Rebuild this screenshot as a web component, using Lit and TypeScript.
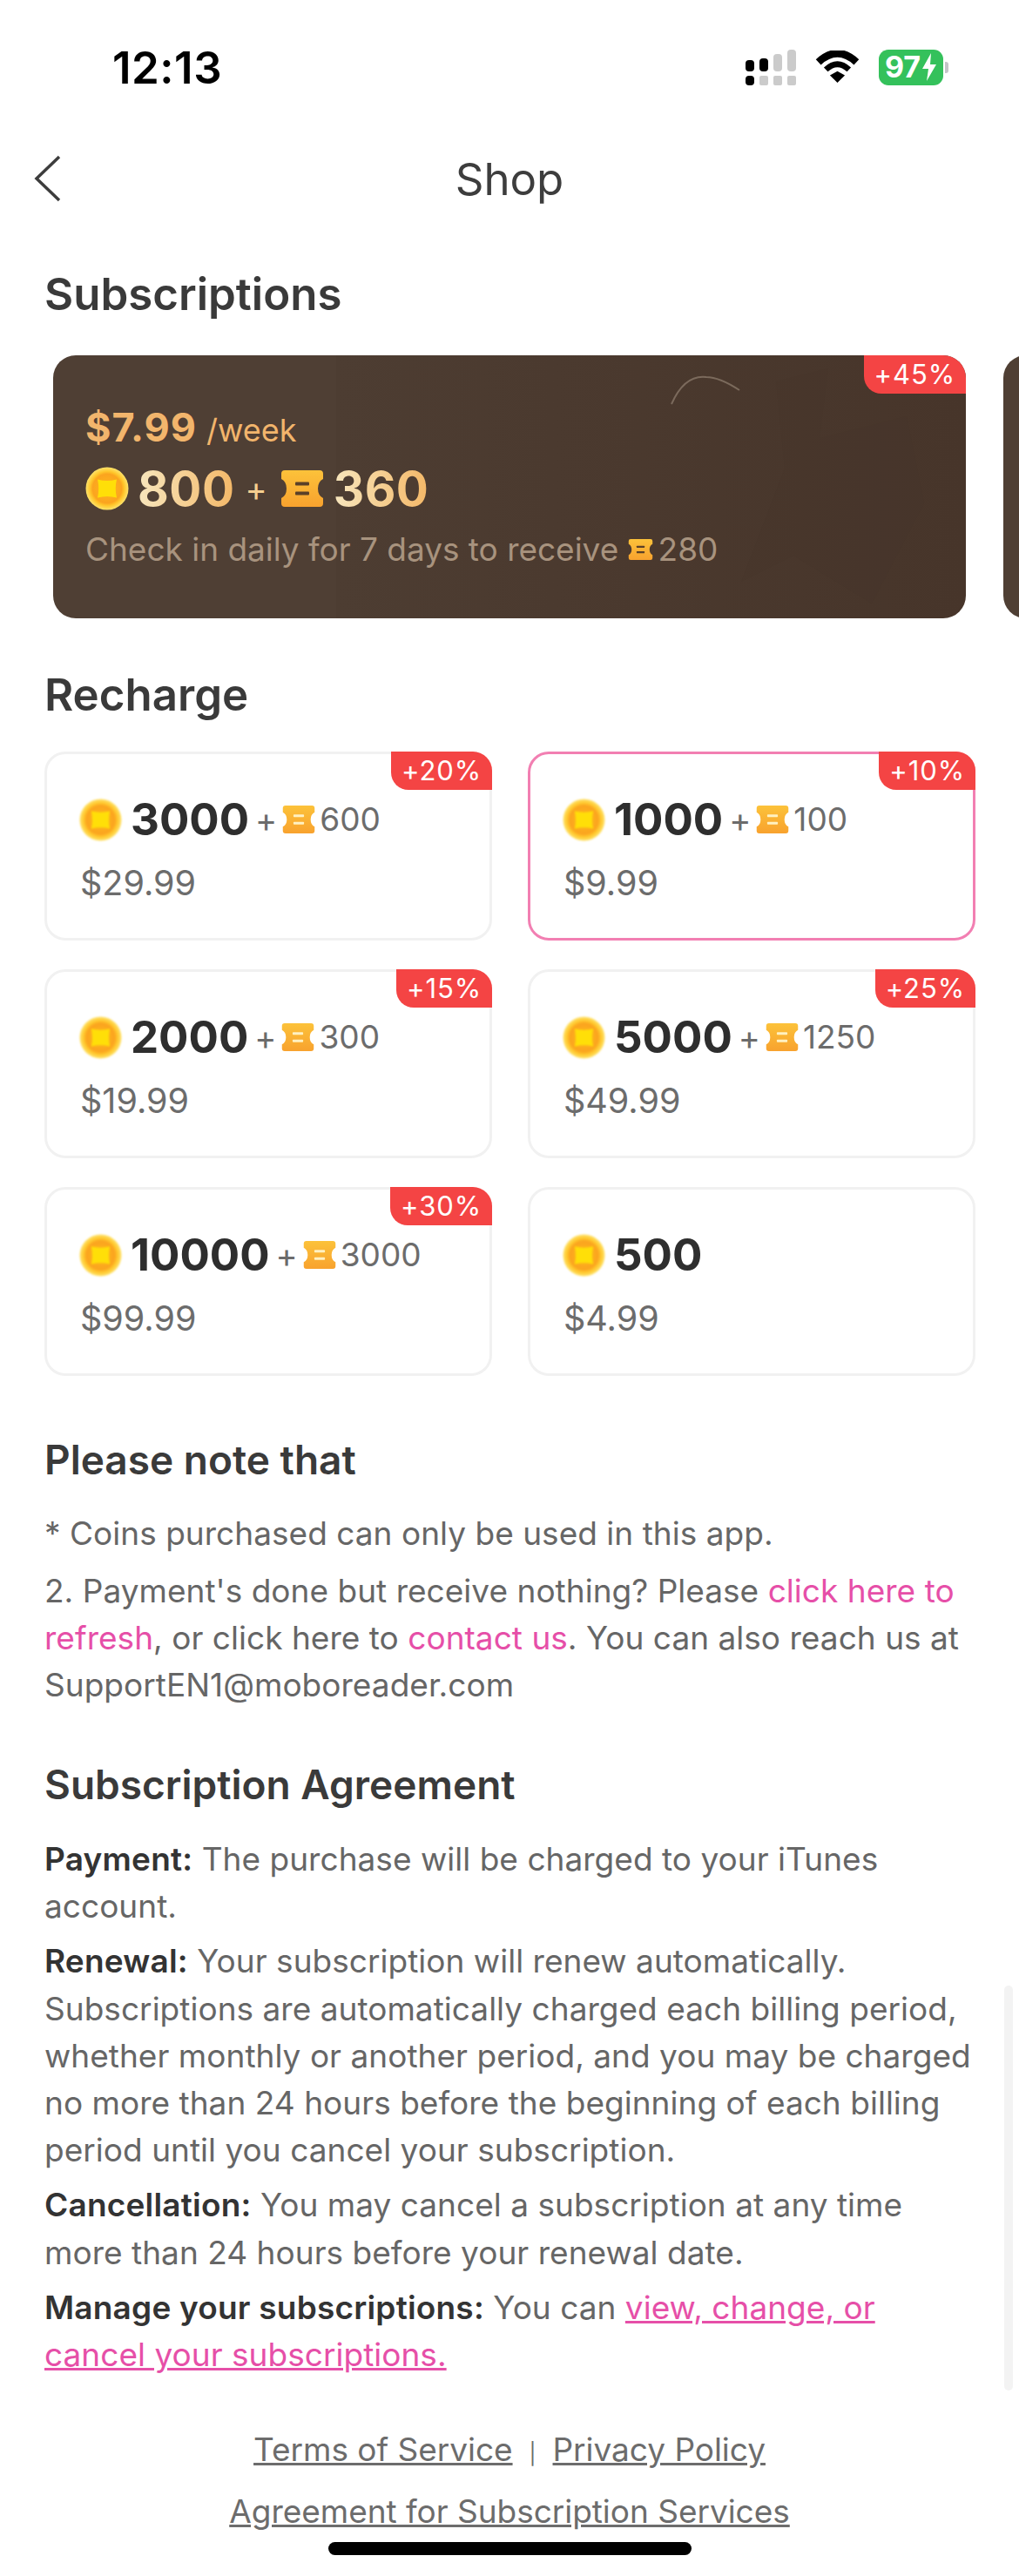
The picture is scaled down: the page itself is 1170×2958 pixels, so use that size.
import { LitElement, html, css, svg } from 'lit';
import { customElement } from 'lit/decorators.js';

const ticketPath = 'M5 0H45Q49 0 49 4V10Q43 13 43 21Q43 29 49 32V38Q49 42 45 42H5Q1 42 1 38V32Q7 29 7 21Q7 13 1 10V4Q1 0 5 0Z';

// coin and ticket are drawn in svg, gradient ids are shared across the shadow root
const coin = (cls: string) => html`<svg class=${cls} viewBox="0 0 50 50">
  <circle cx="25" cy="25" r="24.5" fill="url(#coinFace)" />
  <path d="M14 14.5 Q25 17.5 36 14.5 Q33.5 25 36 35.5 Q25 32.5 14 35.5 Q16.5 25 14 14.5Z" fill="#ffdf08" />
</svg>`;

const ticket = (cls: string, bar = '#fff1c2') => html`<svg class=${cls} viewBox="0 0 50 42">
  <path d=${ticketPath} fill="url(#ticket)" />
  <rect x="17" y="13.5" width="16" height="4" rx="1" fill=${bar} />
  <rect x="17" y="24.5" width="16" height="4" rx="1" fill=${bar} />
</svg>`;

const defs = svg`<defs>
  <radialGradient id="coinFace" cx="0.5" cy="0.5" r="0.5">
    <stop offset="0" stop-color="#ffb81c" />
    <stop offset="0.68" stop-color="#fba41f" />
    <stop offset="0.8" stop-color="#ffc62a" />
    <stop offset="1" stop-color="#ffe36b" />
  </radialGradient>
  <linearGradient id="ticket" x1="0" y1="0" x2="0" y2="1">
    <stop offset="0" stop-color="#fcc23a" />
    <stop offset="1" stop-color="#f8a22e" />
  </linearGradient>
</defs>`;

interface Pack {
  coins: string;
  bonus?: string;
  price: string;
  tag?: string;
  active?: boolean;
}

const packs: Pack[] = [
  { coins: '3000', bonus: '600', price: '$29.99', tag: '+20%' },
  { coins: '1000', bonus: '100', price: '$9.99', tag: '+10%', active: true },
  { coins: '2000', bonus: '300', price: '$19.99', tag: '+15%' },
  { coins: '5000', bonus: '1250', price: '$49.99', tag: '+25%' },
  { coins: '10000', bonus: '3000', price: '$99.99', tag: '+30%' },
  { coins: '500', price: '$4.99' },
];

@customElement('app-root')
export class AppRoot extends LitElement {
  static styles = css`
    :host {
      display: block;
      width: 1170px;
      height: 2958px;
      position: relative;
      overflow: hidden;
      background: #fff;
      font-family: Inter, 'Noto Sans', sans-serif;
      color: #3a3a3a;
    }

    .defs { position: absolute; width: 0; height: 0; }

    .status {
      height: 148px;
      display: flex;
      align-items: center;
      justify-content: space-between;
      padding: 6px 87px 0 129px;
      box-sizing: border-box;
    }
    .time { font: 600 51px/1 'Inter', sans-serif; color: #000; letter-spacing: 0.5px; }
    .status-icons { display: flex; align-items: center; gap: 22px; }
    .battery {
      width: 74px;
      height: 41px;
      border-radius: 11px;
      background: #34c15b;
      color: #fff;
      display: flex;
      align-items: center;
      justify-content: center;
      gap: 1px;
      font: 700 34px/1 'Inter', sans-serif;
      position: relative;
    }
    .battery::after {
      content: '';
      position: absolute;
      right: -6px;
      top: 14px;
      width: 4px;
      height: 13px;
      border-radius: 0 3px 3px 0;
      background: #c4c4c8;
    }

    .nav {
      height: 114px;
      display: flex;
      align-items: center;
      justify-content: center;
      position: relative;
      font-size: 51px;
      color: #3d3d3d;
    }
    .back { position: absolute; left: 36px; top: 29px; width: 38px; height: 56px; }

    .content { padding: 0 51px; }
    h2 { margin: 0; font-weight: 600; font-size: 51px; line-height: 60px; color: #3a3a3a; }
    h2.small { font-size: 46px; }
    .subs-title { padding-top: 46px; }

    .scroller { display: flex; gap: 43px; padding: 40px 0 0 61px; width: 1400px; }
    .sub {
      width: 1048px;
      height: 302px;
      flex: none;
      box-sizing: border-box;
      border-radius: 26px;
      padding: 58px 37px 0;
      position: relative;
      overflow: hidden;
      background: linear-gradient(90deg, #4f3f34 0 31%, #4d3d32 31%, #4b3a2f 55%, #47352a 100%);
    }
    .sub-art { position: absolute; left: 700px; top: 0; width: 347px; height: 302px; }
    .sub-price { position: relative; font-size: 40px; line-height: 50px; color: #f2b56c; display: flex; align-items: baseline; gap: 11px; }
    .sub-price b { font-weight: 700; font-size: 45px; letter-spacing: 1px; }
    .sub-price span { font-size: 36px; }
    .sub-main { position: relative; display: flex; align-items: center; margin-top: 14px; height: 56px; }
    .gold {
      font-size: 55px;
      font-weight: 700;
      line-height: 56px;
      letter-spacing: 0.5px;
      background: linear-gradient(90deg, #f7e6bd, #f4b868);
      -webkit-background-clip: text;
      background-clip: text;
      color: transparent;
    }
    .sub-coin { width: 50px; height: 50px; margin-right: 10px; filter: blur(0.7px); }
    .sub-plus { color: #f6cf90; font-size: 38px; line-height: 1; margin: 0 15px 0 12px; }
    .sub-ticket { width: 50px; height: 42px; margin-right: 11px; }
    .sub-note { position: relative; display: flex; align-items: center; margin-top: 19px; font-size: 37px; line-height: 46px; color: #a8937e; letter-spacing: -0.02px; white-space: pre; }
    .sub-note svg { width: 29px; height: 24px; margin: 0 6px 0 0; }

    .tag {
      position: absolute;
      right: 0;
      top: 0;
      height: 44px;
      box-sizing: border-box;
      padding: 0 12px;
      border-radius: 0 22px 0 20px;
      background: #f44444;
      color: #fff;
      font-size: 31px;
      line-height: 44px;
      letter-spacing: 0.9px;
    }

    .recharge-title { padding-top: 58px; }
    .grid {
      display: grid;
      grid-template-columns: 514px 514px;
      column-gap: 41px;
      row-gap: 33px;
      margin-top: 35px;
    }
    .pack {
      height: 217px;
      box-sizing: border-box;
      border: 3px solid #f1f1f1;
      border-radius: 24px;
      position: relative;
      padding: 48px 0 0 38px;
    }
    .pack.active { border-color: #f27fb2; }
    .pack .tag { top: -3px; right: -3px; }
    .pack-main { display: flex; align-items: center; height: 54px; }
    .pack-coin { width: 49px; height: 49px; margin: 0 10px 0 -1px; filter: blur(1px); }
    .pack-coins { font-size: 51px; line-height: 54px; font-weight: 700; color: #2e2e2e; }
    .pack-plus { font-size: 38px; line-height: 40px; color: #6b6b6b; margin: 0 6px 0 7px; }
    .pack-ticket { width: 38px; height: 32px; margin-right: 5px; }
    .pack-bonus { font-size: 37px; line-height: 40px; color: #6c6c6c; }
    .pack-price { font-size: 39.5px; line-height: 48px; color: #6c6c6c; margin-top: 22px; }

    .note-title { padding-top: 66px; }
    .note { margin-top: 28px; font-size: 37px; line-height: 54px; color: #666; letter-spacing: 0.03px; }
    .note p { margin: 0; }
    .note .first { margin-bottom: 12px; }
    .pink { color: #e64fa8; }
    .agree-title { padding-top: 57px; }
    .agree { margin-top: 29px; font-size: 37px; line-height: 54.2px; color: #666; letter-spacing: 0.03px; }
    .agree p { margin: 0 0 9px; }
    .agree b { font-weight: 600; color: #333; letter-spacing: 0.2px; }
    .agree a { color: #e64fa8; text-decoration: underline; }

    .foot { margin-top: 57px; text-align: center; font-size: 37px; line-height: 50px; color: #6c6c6c; letter-spacing: -0.03px; }
    .foot a { text-decoration: underline; }
    .foot .sep { font-size: 24px; margin: 0 19px; }
    .foot div + div { margin-top: 16px; }

    .home { position: absolute; left: 377px; top: 2919px; width: 417px; height: 15px; border-radius: 8px; background: #000; }
    .scrollbar { position: absolute; left: 1153px; top: 2280px; width: 10px; height: 465px; border-radius: 5px; background: #f3f3f3; }
  `;

  private renderPack(p: Pack) {
    return html`<div class="pack ${p.active ? 'active' : ''}">
      ${p.tag ? html`<div class="tag">${p.tag}</div>` : ''}
      <div class="pack-main">
        ${coin('pack-coin')}
        <span class="pack-coins">${p.coins}</span>
        ${p.bonus
          ? html`<span class="pack-plus">+</span>${ticket('pack-ticket')}<span class="pack-bonus">${p.bonus}</span>`
          : ''}
      </div>
      <div class="pack-price">${p.price}</div>
    </div>`;
  }

  render() {
    return html`
      <svg class="defs">${defs}</svg>
      <div class="status">
        <div class="time">12:13</div>
        <div class="status-icons">
          <svg width="58" height="41" viewBox="0 0 58 41">
            <rect x="0" y="12" width="10" height="13" rx="4" fill="#000" />
            <rect x="0" y="30" width="10" height="11" rx="4" fill="#000" />
            <rect x="16" y="10" width="10" height="15" rx="4" fill="#000" />
            <rect x="16" y="30" width="10" height="11" rx="2" fill="#cbcbcb" />
            <rect x="32" y="5" width="10" height="20" rx="4" fill="#cbcbcb" />
            <rect x="32" y="30" width="10" height="11" rx="2" fill="#cbcbcb" />
            <rect x="48" y="0" width="10" height="25" rx="4" fill="#cbcbcb" />
            <rect x="48" y="30" width="10" height="11" rx="2" fill="#cbcbcb" />
          </svg>
          <svg width="51" height="38" viewBox="0 0 52 40">
            <path d="M3 14 Q26 -7 49 14" fill="none" stroke="#000" stroke-width="9" />
            <path d="M12 23 Q26 10 40 23" fill="none" stroke="#000" stroke-width="7" />
            <path d="M17 30 L26 25 L35 30 L26 39Z" fill="#000" />
          </svg>
          <div class="battery"><span>97</span><svg width="18" height="32" viewBox="0 0 18 32"><path d="M11 0 L1 18 H8 L6 32 L17 13 H10Z" fill="#fff" /></svg></div>
        </div>
      </div>

      <div class="nav">
        <svg class="back" viewBox="0 0 38 56"><path d="M32 3 L6 28 L32 53" fill="none" stroke="#3d3d3d" stroke-width="3.5" /></svg>
        Shop
      </div>

      <div class="content"><h2 class="subs-title">Subscriptions</h2></div>

      <div class="scroller">
        <div class="sub">
          <svg class="sub-art" viewBox="0 0 347 302">
            <path d="M10 56 Q25 22 50 25 Q65 25 88 40" fill="none" stroke="#7b6a5c" stroke-width="2" />
            <path d="M130 30 L190 15 L180 95 L280 70 L300 170 L240 285 L150 230 L90 260 L140 130 Z" fill="#45342a" opacity="0.3" />
          </svg>
          <div class="tag">+45%</div>
          <div class="sub-price"><b>$7.99</b><span>/week</span></div>
          <div class="sub-main">
            ${coin('sub-coin')}
            <span class="gold">800</span>
            <span class="sub-plus">+</span>
            ${ticket('sub-ticket', '#5a4028')}
            <span class="gold">360</span>
          </div>
          <div class="sub-note">Check in daily for 7 days to receive ${ticket('', '#5a4028')}280</div>
        </div>
        <div class="sub"></div>
      </div>

      <div class="content">
        <h2 class="recharge-title">Recharge</h2>
        <div class="grid">${packs.map((p) => this.renderPack(p))}</div>

        <h2 class="note-title small">Please note that</h2>
        <div class="note">
          <p class="first">* Coins purchased can only be used in this app.</p>
          <p>2. Payment's done but receive nothing? Please <span class="pink">click here to refresh</span>, or click here to <span class="pink">contact us</span>. You can also reach us at SupportEN1@moboreader.com</p>
        </div>

        <h2 class="agree-title small">Subscription Agreement</h2>
        <div class="agree">
          <p><b>Payment:</b> The purchase will be charged to your iTunes account.</p>
          <p><b>Renewal:</b> Your subscription will renew automatically. Subscriptions are automatically charged each billing period, whether monthly or another period, and you may be charged no more than 24 hours before the beginning of each billing period until you cancel your subscription.</p>
          <p><b>Cancellation:</b> You may cancel a subscription at any time more than 24 hours before your renewal date.</p>
          <p><b>Manage your subscriptions:</b> You can <a>view, change, or cancel your subscriptions.</a></p>
        </div>

        <div class="foot">
          <div><a>Terms of Service</a><span class="sep">|</span><a>Privacy Policy</a></div>
          <div><a>Agreement for Subscription Services</a></div>
        </div>
      </div>

      <div class="scrollbar"></div>
      <div class="home"></div>
    `;
  }
}
